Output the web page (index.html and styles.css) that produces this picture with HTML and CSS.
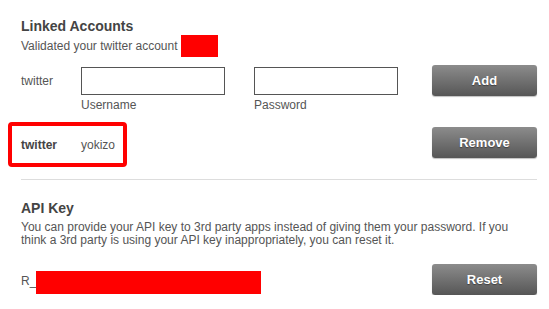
FILE: index.html
```html
<!DOCTYPE html>
<html lang="en">
<head>
    <meta charset="UTF-8">
    <title>Settings</title>
    <link rel="stylesheet" href="styles.css">
</head>
<body>
    <div class="settings">
        <section class="block">
            <h2>Linked Accounts</h2>
            <p class="note">Validated your twitter account <span class="redact redact-name"></span></p>

            <div class="link-row">
                <span class="service">twitter</span>
                <label class="field">
                    <input type="text" class="box">
                    <span class="hint">Username</span>
                </label>
                <label class="field">
                    <input type="password" class="box">
                    <span class="hint">Password</span>
                </label>
                <button class="btn">Add</button>
            </div>

            <div class="linked-row">
                <div class="linked">
                    <span class="service strong">twitter</span>
                    <span class="handle">yokizo</span>
                </div>
                <button class="btn">Remove</button>
            </div>
        </section>

        <section class="block api">
            <h2>API Key</h2>
            <p class="note">You can provide your API key to 3rd party apps instead of giving them your password. If you think a 3rd party is using your API key inappropriately, you can reset it.</p>
            <div class="key-row">
                <span class="key"><span class="key-text">R_</span><span class="redact redact-key"></span></span>
                <button class="btn">Reset</button>
            </div>
        </section>
    </div>
</body>
</html>
```

FILE: styles.css
```css
body {
    margin: 0;
    background: #fff;
    font-family: 'Liberation Sans', Arial, sans-serif;
    color: #555;
}

.settings {
    padding: 18px 12px 0 21px;
}

h2 {
    margin: 0;
    font-size: 14px;
    line-height: 17px;
    color: #444;
}

.note {
    margin: 0;
    font-size: 12px;
    line-height: 13px;
    display: flex;
    align-items: center;
}

.api .note {
    display: block;
    max-width: 500px;
    margin-top: 4px;
}

.redact {
    display: inline-block;
    background: #f00;
}

.redact-name {
    width: 37px;
    height: 22px;
    margin-left: 3px;
}

.link-row {
    display: flex;
    align-items: flex-start;
    margin-top: 10px;
}

.service {
    width: 60px;
    font-size: 12px;
    line-height: 14px;
    padding-top: 7px;
}

.field {
    display: flex;
    flex-direction: column;
    margin-right: 29px;
}

.box {
    box-sizing: border-box;
    width: 144px;
    height: 28px;
    margin: 0;
    border: 1px solid #555;
    border-radius: 0;
    padding: 2px 4px;
}

.hint {
    font-size: 12px;
    line-height: 14px;
    margin-top: 3px;
}

.btn {
    margin-left: auto;
    width: 105px;
    height: 31px;
    border: none;
    border-radius: 3px;
    background: linear-gradient(#8c8c8c, #565656);
    box-shadow: 0 1px 1px rgba(0, 0, 0, 0.25);
    color: #fff;
    font-family: 'Liberation Sans', Arial, sans-serif;
    font-size: 13px;
    font-weight: bold;
    text-shadow: 0 1px 1px rgba(0, 0, 0, 0.4);
    cursor: pointer;
}

.link-row .btn {
    margin-top: -2px;
}

.linked-row {
    display: flex;
    align-items: flex-start;
    margin-top: 10px;
    padding-bottom: 12px;
    border-bottom: 1px solid #ddd;
}

.linked-row .btn {
    margin-top: 5px;
}

.linked {
    display: flex;
    align-items: center;
    width: 102px;
    height: 37px;
    margin-left: -13px;
    border: 4px solid #f00;
    border-radius: 4px;
    padding-left: 9px;
    font-size: 12px;
}

.strong {
    padding-top: 0;
    font-weight: bold;
    color: #444;
}

.handle {
    color: #555;
}

.api {
    padding-top: 20px;
}

.key-row {
    display: flex;
    align-items: flex-start;
    margin-top: 17px;
}

.key {
    display: flex;
    align-items: flex-start;
    margin-top: 7px;
    font-size: 12px;
    line-height: 12px;
}

.key-text {
    padding-top: 4px;
}

.redact-key {
    width: 225px;
    height: 23px;
}
```
